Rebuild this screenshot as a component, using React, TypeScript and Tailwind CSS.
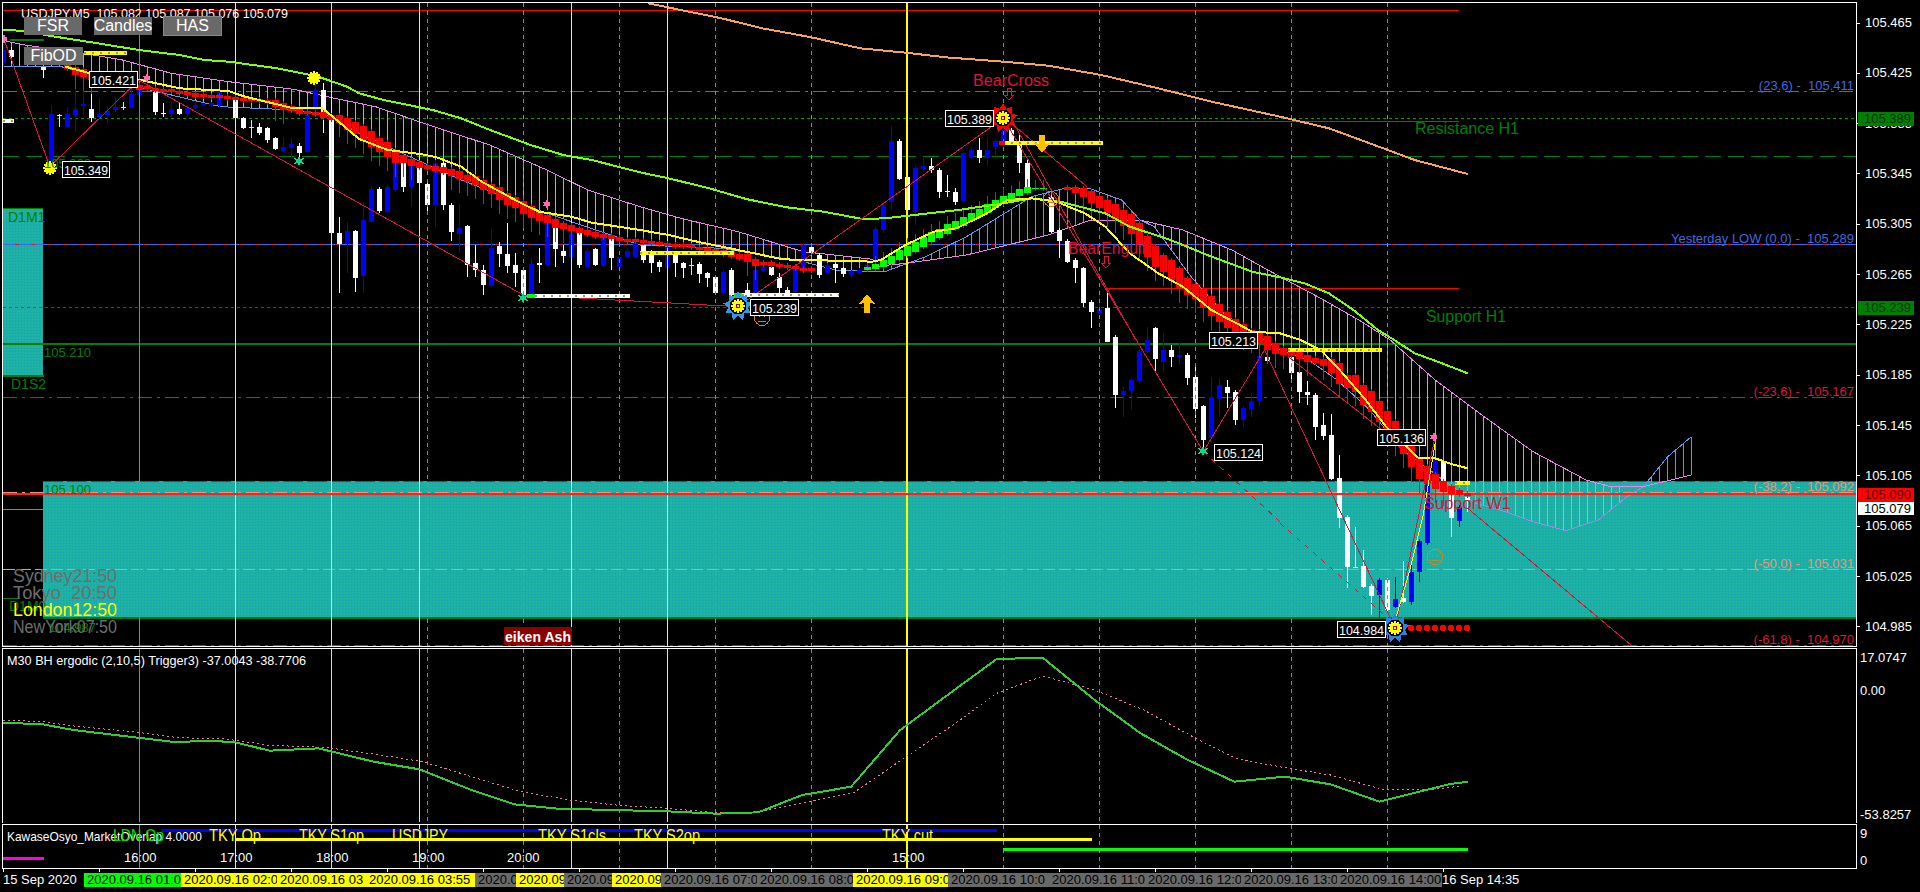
import type { ReactNode } from "react";

type Pt = number[];

// positions below were read off the zoomed crops: x scaled 2.45, y scaled 3
const at = (ox: number, oy: number, pts: Pt[]): Pt[] => pts.map(([x, y]) => [ox + x / 2.45, oy + y / 3]);
const sub = (ox: number, pts: Pt[]): Pt[] => pts.map(([x, y]) => [ox + x / 1.633, 640 + y / 3]);
const barX = (i: number) => 3 + 8 * i;
const str = (pts: Pt[]) => pts.map((p) => p.join(",")).join(" ");

function interp(pts: Pt[], x: number) {
  for (let i = 1; i < pts.length; i++) {
    if (x <= pts[i][0]) {
      const t = (x - pts[i - 1][0]) / (pts[i][0] - pts[i - 1][0] || 1);
      return pts[i - 1][1] + t * (pts[i][1] - pts[i - 1][1]);
    }
  }
  return pts[pts.length - 1][1];
}

// [bar, colour, wick top, body top, body bottom, wick bottom]
type Bar = [number, string, number, number, number, number];

const barsA: Bar[] = [
  [0, "b", 120, 150, 190, 200], [1, "w", 140, 150, 170, 190], [5, "w", 200, 200, 210, 235], [6, "b", 315, 342, 490, 495],
  [7, "y", 342, 345, 345, 380], [8, "b", 322, 342, 380, 382], [9, "b", 250, 327, 345, 395], [10, "b", 250, 312, 317, 345],
  [11, "w", 268, 327, 355, 365], [12, "b", 295, 342, 352, 355], [13, "b", 320, 333, 345, 370], [14, "b", 290, 320, 330, 335],
  [15, "y", 305, 322, 322, 330], [16, "b", 250, 283, 323, 325], [17, "b", 260, 270, 285, 288], [18, "b", 250, 255, 270, 272],
  [19, "w", 260, 275, 335, 345], [20, "w", 310, 338, 343, 350], [21, "b", 305, 327, 342, 350], [22, "w", 305, 327, 342, 344],
  [23, "b", 315, 323, 343, 350], [24, "b", 310, 316, 323, 326], [25, "b", 308, 312, 316, 320], [26, "b", 305, 308, 316, 320],
  [27, "b", 270, 275, 315, 325], [29, "w", 275, 295, 355, 360], [30, "w", 350, 355, 385, 387], [31, "y", 360, 382, 382, 415],
  [32, "w", 370, 380, 400, 405], [33, "w", 380, 385, 420, 430], [34, "w", 410, 415, 447, 450], [35, "b", 410, 442, 453, 455],
  [36, "b", 415, 432, 443, 470], [37, "w", 430, 437, 460, 470], [38, "b", 340, 345, 455, 458], [39, "b", 250, 270, 330, 340],
  [40, "w", 250, 270, 345, 400], [41, "w", 350, 350, 700, 702], [42, "w", 650, 700, 732, 880], [43, "b", 665, 693, 732, 820],
  [44, "w", 690, 693, 833, 875], [45, "b", 605, 660, 827, 880], [46, "b", 558, 568, 665, 667], [47, "w", 560, 568, 633, 640],
  [48, "b", 555, 560, 635, 640], [49, "b", 490, 490, 570, 575], [50, "w", 480, 490, 560, 575], [51, "b", 480, 490, 560, 620],
  [52, "w", 480, 490, 550, 555], [53, "w", 545, 553, 615, 640], [54, "b", 480, 490, 615, 680], [55, "w", 480, 490, 615, 630],
  [56, "w", 610, 615, 695, 722], [57, "b", 612, 685, 702, 760], [58, "w", 675, 678, 795, 830], [59, "w", 735, 790, 810, 832],
  [60, "w", 795, 810, 855, 885], [61, "b", 688, 743, 857, 860], [62, "w", 725, 737, 762, 800], [63, "w", 670, 762, 797, 820],
  [64, "w", 760, 795, 818, 860], [65, "w", 805, 810, 885, 888], [66, "b", 775, 792, 882, 884], [67, "w", 745, 788, 795, 850],
  [68, "b", 630, 670, 795, 798], [69, "w", 675, 680, 748, 800], [70, "w", 735, 752, 768, 790], [71, "b", 695, 700, 772, 800],
  [72, "w", 695, 700, 795, 805], [73, "b", 745, 752, 800, 802], [74, "w", 745, 748, 795, 797], [75, "b", 710, 715, 797, 800],
  [76, "w", 710, 715, 775, 810], [77, "b", 770, 772, 800, 820], [78, "b", 745, 752, 770, 772], [79, "b", 725, 730, 772, 775],
];

const barsB: Bar[] = [
  [0, "w", 728, 735, 780, 790], [1, "w", 750, 755, 790, 820], [2, "w", 780, 785, 800, 815], [3, "b", 735, 740, 805, 808],
  [4, "w", 755, 760, 790, 830], [5, "w", 785, 790, 805, 835], [6, "y", 775, 795, 795, 825], [7, "w", 785, 792, 822, 850],
  [8, "w", 815, 820, 833, 860], [9, "w", 825, 830, 878, 885], [10, "b", 810, 815, 880, 882], [11, "w", 805, 810, 885, 887],
  [13, "w", 850, 870, 885, 887], [14, "b", 805, 810, 880, 882], [15, "b", 790, 800, 812, 815], [16, "w", 790, 800, 825, 827],
  [17, "w", 820, 830, 865, 880], [18, "w", 860, 870, 885, 887], [19, "b", 795, 800, 875, 878], [20, "b", 730, 735, 800, 802],
  [21, "w", 735, 740, 760, 762], [22, "w", 760, 765, 825, 835], [23, "b", 790, 795, 820, 822], [24, "w", 790, 792, 805, 850],
  [25, "w", 800, 805, 822, 830], [26, "b", 810, 815, 825, 830], [27, "b", 805, 810, 818, 822], [28, "b", 780, 795, 808, 810],
  [29, "b", 680, 688, 780, 785], [30, "b", 605, 615, 690, 700], [31, "b", 378, 423, 605, 630], [32, "w", 418, 423, 537, 540],
  [33, "w", 525, 530, 630, 632], [34, "b", 498, 503, 635, 675], [35, "b", 475, 497, 507, 510], [36, "w", 475, 497, 510, 520],
  [37, "w", 505, 510, 575, 595], [38, "w", 525, 573, 577, 590], [39, "w", 565, 575, 605, 615], [40, "b", 455, 460, 603, 605],
  [41, "b", 440, 450, 473, 476], [42, "w", 415, 450, 475, 490], [43, "b", 415, 450, 473, 497], [44, "b", 418, 423, 440, 470],
  [45, "b", 385, 390, 423, 425], [46, "w", 385, 390, 425, 427], [47, "w", 400, 425, 490, 520], [48, "w", 475, 490, 570, 575],
  [51, "w", 585, 590, 697, 700], [52, "w", 685, 690, 722, 775], [53, "w", 718, 722, 785, 790], [54, "w", 775, 780, 805, 850],
  [55, "w", 800, 805, 908, 920], [56, "w", 900, 905, 935, 985], [57, "b", 870, 928, 940, 942], [58, "w", 870, 925, 1025, 1027],
  [59, "w", 1005, 1012, 1185, 1225], [60, "b", 1160, 1173, 1185, 1250], [61, "b", 1135, 1140, 1173, 1230], [62, "b", 1048, 1053, 1142, 1145],
  [63, "b", 980, 1020, 1055, 1058], [64, "w", 980, 985, 1077, 1115], [65, "b", 1000, 1050, 1085, 1115], [66, "w", 1035, 1050, 1072, 1100],
  [67, "b", 1030, 1065, 1070, 1095], [68, "w", 1060, 1065, 1133, 1155], [69, "w", 1090, 1131, 1227, 1255], [70, "w", 1214, 1218, 1320, 1350],
  [71, "b", 1130, 1192, 1315, 1318], [72, "b", 1135, 1155, 1197, 1250], [73, "w", 1140, 1160, 1178, 1225], [74, "w", 1170, 1175, 1260, 1275],
  [75, "b", 1218, 1223, 1260, 1280], [76, "b", 1180, 1203, 1228, 1250], [77, "b", 1060, 1067, 1203, 1217], [78, "w", 1065, 1070, 1082, 1085],
];

const barsC: Bar[] = [
  [1, "w", 45, 52, 100, 120], [2, "w", 90, 95, 155, 190], [3, "w", 123, 155, 165, 195], [4, "w", 160, 165, 262, 300],
  [5, "w", 220, 255, 288, 300], [6, "w", 222, 285, 417, 420], [7, "w", 345, 415, 535, 565], [8, "w", 525, 530, 680, 745],
  [9, "y", 560, 680, 680, 682], [10, "w", 630, 678, 742, 745], [11, "w", 733, 738, 768, 825], [12, "b", 715, 720, 765, 835],
  [13, "w", 715, 720, 810, 815], [14, "b", 710, 777, 800, 805], [15, "w", 662, 775, 785, 790], [16, "b", 670, 697, 785, 795],
  [17, "b", 598, 603, 697, 725], [18, "b", 375, 432, 610, 615], [19, "b", 355, 360, 430, 432], [20, "w", 360, 365, 432, 434],
  [21, "w", 432, 437, 535, 590], [22, "b", 495, 500, 542, 560], [23, "w", 465, 470, 480, 515],
];

const allBars: Bar[] = [
  ...barsA,
  ...barsB.map(([i, c, a, b, d, e]): Bar => [i + 80, c, a, b, d, e]),
  ...barsC.map(([i, c, a, b, d, e]): Bar => [i + 160, c, a + 1020, b + 1020, d + 1020, e + 1020]),
];

const redOne = [
  200, 212, 218, 230, 235, 240, 248, 250, 252, 262, 262, 268, 270, 272, 277, 280, 285, 287, 289, 290, 292, 295, 297, 298, 302, 305,
  310, 320, 325, 333, 338, 340, 345, 353, 358, 372, 385, 400, 417, 435, 448, 470, 478, 488, 495, 500, 505, 510, 518, 525, 535, 542,
  555, 567, 580, 597, 607, 622, 637, 650, 657, 670, 678, 685, 692, 698, 703, 708, 712, 717, 720, 722,
  725, 727, 730, 733, 735, 737, 740, 745, 748, 752, 757, 762, 770, 775, 788, 790, 792, 797, 800, 803, 807, 808,
];
const redTwo = [
  565, 570, 578, 592, 605, 620, 635, 655, 672, 700, 740, 770, 790, 810, 835, 860, 875, 895, 918, 940, 960, 975, 990, 1003, 1012, 1030, 1045,
  1055, 1060, 1067, 1075, 1082, 1088, 1098, 1120, 1145, 1150, 1185, 1205, 1235, 1265, 1295, 1330, 1370, 1405, 1425, 1445, 1460, 1470, 1478, 1483,
];
// [bar, centre, height]
const greenHa: Pt[] = [
  [108, 805, 8], [109, 800, 15], [110, 790, 20], [111, 780, 25], [112, 765, 28], [113, 752, 30], [114, 740, 30], [115, 725, 30], [116, 712, 30],
  [117, 700, 28], [118, 687, 28], [119, 675, 26], [120, 665, 26], [121, 652, 24], [122, 640, 24], [123, 625, 25], [124, 612, 25], [125, 600, 25],
  [126, 590, 20], [127, 578, 20], [128, 570, 18], [129, 565, 4], [130, 565, 4],
];

const yellowMa = [
  ...at(0, 0, [[160, 200], [215, 218], [300, 235], [345, 240], [440, 265], [560, 273], [600, 290], [720, 325], [790, 325], [820, 355], [880, 417], [950, 450], [1030, 462], [1070, 472], [1130, 500], [1180, 545], [1270, 605], [1320, 635], [1400, 650], [1450, 668], [1568, 690]]),
  ...at(640, 0, [[70, 705], [140, 725], [240, 750], [350, 778], [570, 785], [590, 780], [650, 735], [720, 695], [775, 685], [850, 640], [900, 600], [960, 595], [1020, 605], [1090, 640], [1140, 680], [1200, 760], [1270, 820], [1330, 860], [1400, 930], [1500, 995], [1568, 1000]]),
  ...at(1280, 340, [[50, 0], [100, 30], [150, 95], [210, 180], [260, 260], [340, 355], [380, 355], [420, 372], [460, 385]]),
];
const limeMa = [
  ...at(0, 0, [[7, 90], [50, 92]]),
  ...at(0, 0, [[135, 110], [240, 130], [340, 150], [440, 165], [500, 180], [560, 185], [680, 205], [780, 230], [850, 260], [880, 280], [940, 300], [1060, 330], [1130, 355], [1190, 385], [1300, 435], [1380, 465], [1450, 480], [1568, 517]]),
  ...at(640, 0, [[70, 535], [170, 565], [260, 597], [360, 622], [450, 635], [545, 657], [600, 655], [650, 648], [780, 630], [880, 612], [960, 595], [1030, 605], [1140, 640], [1200, 680], [1300, 720], [1400, 770], [1500, 815], [1568, 832]]),
  ...at(1280, 0, [[60, 850], [120, 880], [180, 930], [240, 990], [280, 1020]]),
  ...at(1280, 340, [[330, 40], [380, 62], [460, 100]]),
];
const orangeMa = [
  ...at(640, 0, [[20, 10], [100, 30], [200, 55], [300, 85], [420, 112], [540, 145], [650, 158], [750, 172], [890, 185], [1000, 197], [1130, 225], [1270, 265], [1400, 305], [1568, 350]]),
  ...at(1280, 0, [[120, 385], [220, 430], [330, 480], [460, 522]]),
];

const pinkTop = [
  ...at(0, 0, [[10, 122], [60, 135], [205, 160], [300, 180], [420, 220], [560, 245], [720, 268], [820, 295], [920, 320], [1050, 375], [1200, 435], [1340, 510], [1440, 570], [1568, 620]]),
  ...at(640, 0, [[100, 655], [240, 695], [400, 755], [572, 778]]),
];
const blueUnder = [
  ...at(0, 0, [[10, 200], [150, 200], [340, 262], [540, 320], [720, 330], [800, 345], [880, 400], [950, 440], [1040, 490], [1130, 540], [1340, 640], [1568, 735]]),
  ...at(640, 0, [[200, 745], [400, 785], [480, 810], [572, 815]]),
];
const blueTop = at(640, 0, [[572, 815], [600, 815], [700, 770], [800, 710], [880, 650], [960, 590], [1040, 565], [1100, 565], [1180, 600], [1225, 660]]);
const pinkUnder = at(640, 0, [[572, 800], [650, 790], [800, 765], [1000, 705], [1100, 662], [1225, 660]]);
const pinkTopTwo = [
  ...at(640, 0, [[1225, 660], [1330, 690], [1450, 750], [1568, 830]]),
  ...at(1280, 0, [[100, 895], [200, 965], [270, 1020]]),
  ...at(1280, 340, [[380, 120], [500, 230], [620, 335], [750, 420], [810, 440], [890, 440]]),
];
const blueUnderTwo = [
  ...at(640, 0, [[1225, 660], [1260, 680], [1350, 830], [1430, 940], [1530, 1020]]),
  ...at(1280, 340, [[0, 30], [70, 60], [140, 120], [220, 210], [300, 330], [400, 420], [480, 490], [540, 510], [620, 545], [700, 572], [780, 540], [850, 470], [890, 440]]),
];
const blueTopTwo = at(1280, 340, [[890, 440], [950, 350], [1008, 290]]);
const pinkUnderTwo = at(1280, 340, [[890, 440], [1008, 405]]);

const zigzag = [
  [4, 39], ...at(0, 0, [[122, 500], [340, 240], [1282, 885]]), ...at(640, 0, [[240, 920], [890, 355]]),
  ...at(640, 340, [[1380, 335], [1530, 30]]), ...at(1280, 340, [[282, 865], [380, 290]]),
];
const thinLines: Pt[][] = [
  at(640, 0, [[905, 365], [1095, 560]]),
  at(640, 0, [[920, 380], [1215, 1020]]),
  at(1280, 340, [[20, 50], [250, 270], [360, 400]]),
  at(1280, 340, [[460, 505], [860, 915]]),
];

const ergodic = [
  ...sub(0, [[5, 248], [70, 253], [120, 270], [220, 292], [280, 305], [345, 304], [380, 305], [440, 332], [520, 325], [610, 365], [685, 388], [770, 450], [840, 493], [910, 506], [1000, 510], [1090, 514], [1170, 521], [1238, 517], [1310, 465], [1390, 440], [1470, 270], [1568, 137]]),
  ...sub(960, [[60, 57], [100, 55], [135, 53], [220, 180], [295, 280], [370, 358], [448, 425], [530, 410], [605, 433], [685, 485], [800, 432], [830, 425]]),
];
const trigger = [
  ...sub(0, [[5, 240], [70, 245], [120, 258], [230, 278], [290, 293], [370, 297], [440, 316], [530, 322], [620, 345], [690, 365], [770, 410], [850, 455], [930, 480], [1010, 496], [1090, 505], [1170, 518], [1238, 517], [1310, 490], [1395, 457], [1480, 350], [1568, 240]]),
  ...sub(960, [[60, 160], [135, 108], [220, 150], [300, 210], [380, 290], [450, 355], [530, 383], [605, 405], [690, 448], [770, 448], [820, 438]]),
];

const gridXs = [427, 523, 619, 715, 811, 907, 1003, 1099, 1195, 1291, 1387];
const sessionLines: [number, string, number][] = [
  [139.5, "#00e000", 1], [235.5, "#ffff00", 1], [331.5, "#ffff00", 1], [419.5, "#ffff00", 1], [571.5, "#ffff00", 1], [667.5, "#ffff00", 1], [907, "#ffff00", 2],
];

function T({ x, y, cls, end, len, children }: { x: number; y: number; cls: string; end?: boolean; len?: number; children: ReactNode }) {
  return (
    <text x={x} y={y} dominantBaseline="central" textAnchor={end ? "end" : "start"} textLength={len} lengthAdjust={len ? "spacingAndGlyphs" : undefined} className={`whitespace-pre ${cls}`}>
      {children}
    </text>
  );
}

function Tag({ x, y, w, text }: { x: number; y: number; w: number; text: string }) {
  return (
    <g>
      <rect x={x + 0.5} y={y + 0.5} width={w} height={16} fill="#000" stroke="#fff" />
      <T x={x + 2} y={y + 9} len={w - 3} cls="fill-white text-[13px]">{text}</T>
    </g>
  );
}

function Burst({ x, y, r, n, fill, ratio = 0.7 }: { x: number; y: number; r: number; n: number; fill: string; ratio?: number }) {
  const pts: Pt[] = [];
  for (let i = 0; i < n * 2; i++) {
    const a = (Math.PI * i) / n - Math.PI / 2;
    const rad = i % 2 ? r * ratio : r;
    pts.push([x + Math.cos(a) * rad, y + Math.sin(a) * rad]);
  }
  return <polygon points={str(pts)} fill={fill} />;
}

function Sun({ x, y, ring }: { x: number; y: number; ring?: string }) {
  return (
    <g>
      {ring && <Burst x={x} y={y} r={15} n={9} fill={ring} ratio={0.65} />}
      {ring && <circle cx={x} cy={y} r={8.5} fill="#000" />}
      <Burst x={x} y={y} r={7.5} n={12} fill="#ffff00" ratio={0.75} />
      {ring && <circle cx={x} cy={y} r={2} fill="none" stroke="#a00000" />}
    </g>
  );
}

function Smiley({ x, y }: { x: number; y: number }) {
  return (
    <g fill="none" stroke="#c88a1e">
      <circle cx={x} cy={y} r={7.5} />
      <path d={`M${x - 3} ${y - 2}h1M${x + 2} ${y - 2}h1M${x - 4} ${y + 3}h8`} />
    </g>
  );
}

function HollowArrow({ x, y }: { x: number; y: number }) {
  return <path d={`M${x - 2} ${y - 6}h4v7h3l-5 5l-5 -5h3z`} fill="none" stroke="#dc143c" />;
}

function DotBar({ x1, x2, y, color }: { x1: number; x2: number; y: number; color: string }) {
  return (
    <g>
      <line x1={x1} x2={x2} y1={y} y2={y} stroke={color} strokeWidth={4} />
      <line x1={x1} x2={x2} y1={y} y2={y} stroke="#9a9a50" strokeWidth={1.5} strokeDasharray="2 6" />
    </g>
  );
}

function Grid({ top, bottom, dim }: { top: number; bottom: number; dim?: boolean }) {
  return (
    <g>
      {gridXs.map((x) => (
        <line key={x} x1={x + 0.5} x2={x + 0.5} y1={top} y2={bottom} stroke="#8a8a8a" strokeDasharray="4 4" />
      ))}
      {sessionLines.map(([x, c, w]) => (
        <line key={x} x1={x} x2={x} y1={top} y2={bottom} stroke={dim && (x === 331.5 || x === 571.5) ? "#d8d8c0" : c} strokeWidth={w} />
      ))}
    </g>
  );
}

function Hatch({ top, bottom, from, to, color }: { top: Pt[]; bottom: Pt[]; from: number; to: number; color: string }) {
  const rows: ReactNode[] = [];
  for (let i = from; i <= to; i++) {
    const x = barX(i) + 0.5;
    rows.push(<line key={i} x1={x} x2={x} y1={interp(top, x)} y2={interp(bottom, x)} stroke={color} />);
  }
  return <g>{rows}</g>;
}

function Candles() {
  return (
    <g>
      {allBars.map(([i, c, wt, bt, bb, wb]) => {
        const x = barX(i);
        const col = c === "b" ? "#0000ff" : c === "y" ? "#ffff00" : "#ffffff";
        return (
          <g key={i}>
            <line x1={x + 0.5} x2={x + 0.5} y1={wt / 3} y2={wb / 3} stroke={col} />
            <rect x={x - 2} y={bt / 3} width={5} height={Math.max(1, (bb - bt) / 3)} fill={col} />
          </g>
        );
      })}
    </g>
  );
}

function RedBlocks({ ys, start }: { ys: number[]; start: number }) {
  return (
    <g>
      {ys.map((y, k) => {
        const prev = ys[k - 1] ?? y;
        const next = ys[k + 1] ?? y;
        const h = Math.min(62, Math.max(9, Math.abs(next - prev) * 1.3)) / 3;
        const x = barX(start + k);
        const mid = y / 3;
        return (
          <g key={k}>
            <line x1={x + 0.5} x2={x + 0.5} y1={mid - h / 2 - 2} y2={mid + h / 2 + (h > 6 ? 14 : 2)} stroke="#dc143c" />
            <rect x={x - 3} y={mid - h / 2} width={7} height={h} fill="#ff0000" />
          </g>
        );
      })}
    </g>
  );
}

function GreenBlocks() {
  return (
    <g>
      {greenHa.map(([i, y, h]) => {
        const x = barX(i);
        return (
          <g key={i}>
            <line x1={x + 0.5} x2={x + 0.5} y1={y / 3 - h / 6 - 8} y2={y / 3 + h / 6 + 2} stroke="#008a00" />
            <rect x={x - 3} y={y / 3 - h / 6} width={7} height={h / 3} fill="#00ff00" />
          </g>
        );
      })}
    </g>
  );
}

function MainChart() {
  return (
    <svg width={1853} height={643} viewBox="3 3 1853 643" shapeRendering="crispEdges" className="block">
      <defs>
        <pattern id="teal" width="3" height="3" patternUnits="userSpaceOnUse">
          <rect width="3" height="3" fill="#1db0a6" />
          <rect width="1" height="1" fill="#12a4a8" />
          <rect x="2" y="1" width="1" height="1" fill="#2ab49b" />
        </pattern>
      </defs>

      <rect x={3} y={208} width={40} height={168} fill="url(#teal)" />
      <line x1={3} x2={43} y1={208.5} y2={208.5} stroke="#008000" />
      <line x1={3} x2={44} y1={376} y2={376} stroke="#008000" strokeWidth={2} />
      <rect x={43} y={481} width={1813} height={137} fill="url(#teal)" />
      <line x1={43} x2={1856} y1={481.5} y2={481.5} stroke="#008000" strokeDasharray="20 4" />
      <line x1={43} x2={1856} y1={618} y2={618} stroke="#008000" strokeWidth={2} />
      <line x1={10} x2={44} y1={40} y2={40} stroke="#008000" strokeWidth={2} />
      <line x1={3} x2={20} y1={598.5} y2={598.5} stroke="#008000" />

      <line x1={3} x2={1459} y1={10.5} y2={10.5} stroke="#ff0000" />
      <line x1={1015} x2={1459} y1={121.5} y2={121.5} stroke="#ff0000" />
      <line x1={1107} x2={1459} y1={288.5} y2={288.5} stroke="#ff0000" />
      <line x1={3} x2={1856} y1={91.5} y2={91.5} stroke="#4169e1" strokeDasharray="14 5 3 5" />
      <line x1={3} x2={1856} y1={118.5} y2={118.5} stroke="#00a000" strokeDasharray="3 3" />
      <line x1={3} x2={1856} y1={156.5} y2={156.5} stroke="#008000" strokeDasharray="16 7" />
      <line x1={3} x2={1856} y1={244.5} y2={244.5} stroke="#dc143c" />
      <line x1={3} x2={1856} y1={244.5} y2={244.5} stroke="#4169e1" strokeDasharray="12 4" />
      <line x1={3} x2={1856} y1={307.5} y2={307.5} stroke="#008000" strokeDasharray="3 3" />
      <line x1={3} x2={1856} y1={344} y2={344} stroke="#008000" strokeWidth={2} />
      <line x1={3} x2={1856} y1={397.5} y2={397.5} stroke="#dc143c" strokeDasharray="14 5 3 5" />
      <line x1={3} x2={1856} y1={492.5} y2={492.5} stroke="#e9967a" strokeDasharray="14 5 3 5" />
      <line x1={3} x2={1856} y1={509} y2={509} stroke="#778899" />
      <line x1={3} x2={1856} y1={569.5} y2={569.5} stroke="#e9967a" strokeDasharray="12 4" />
      <line x1={3} x2={1856} y1={645.5} y2={645.5} stroke="#dc143c" strokeDasharray="14 5 3 5" />

      <Hatch top={pinkTop} bottom={blueUnder} from={0} to={108} color="#ee82ee" />
      <Hatch top={blueTop} bottom={pinkUnder} from={109} to={142} color="#6495ed" />
      <Hatch top={pinkTopTwo} bottom={blueUnderTwo} from={143} to={202} color="#ee82ee" />
      <Hatch top={blueTopTwo} bottom={pinkUnderTwo} from={205} to={211} color="#6495ed" />
      <polyline points={str(pinkTop)} fill="none" stroke="#ee82ee" />
      <polyline points={str(blueUnder)} fill="none" stroke="#6495ed" />
      <polyline points={str(blueTop)} fill="none" stroke="#6495ed" />
      <polyline points={str(pinkUnder)} fill="none" stroke="#ee82ee" />
      <polyline points={str(pinkTopTwo)} fill="none" stroke="#ee82ee" />
      <polyline points={str(blueUnderTwo)} fill="none" stroke="#9a8be8" />
      <polyline points={str(blueTopTwo)} fill="none" stroke="#6495ed" />
      <polyline points={str(pinkUnderTwo)} fill="none" stroke="#ee82ee" />

      <Candles />
      <Grid top={3} bottom={646} />
      <line x1={3} x2={1856} y1={494} y2={494} stroke="#ff2020" strokeWidth={2} />
      <RedBlocks ys={redOne} start={8} />
      <RedBlocks ys={redTwo} start={133} />
      <GreenBlocks />

      <polyline points={str(orangeMa)} fill="none" stroke="#f4a460" strokeWidth={2} />
      <polyline points={str(limeMa)} fill="none" stroke="#7fff00" strokeWidth={2} />
      <polyline points={str(yellowMa)} fill="none" stroke="#ffff00" strokeWidth={2} />
      <polyline points={str(zigzag)} fill="none" stroke="#dc143c" />
      {thinLines.map((l, i) => (
        <polyline key={i} points={str(l)} fill="none" stroke="#e01030" />
      ))}
      <polyline points={str(at(640, 340, [[1380, 335], [1568, 545]]))} fill="none" stroke="#e01030" strokeDasharray="5 6" />
      <polyline points={str(at(1280, 340, [[0, 550], [270, 840]]))} fill="none" stroke="#e01030" strokeDasharray="5 6" />
      <polyline points={str(at(1280, 340, [[285, 830], [318, 690], [350, 530], [380, 310]]))} fill="none" stroke="#ffff00" />

      <DotBar x1={84} x2={127} y={53} color="#ffff00" />
      <DotBar x1={1003} x2={1103} y={143} color="#ffff00" />
      <DotBar x1={640} x2={734} y={253} color="#ffff00" />
      <DotBar x1={1288} x2={1382} y={350} color="#ffff00" />
      <DotBar x1={1455} x2={1470} y={483} color="#ffff00" />
      <DotBar x1={3} x2={14} y={121} color="#ffffff" />
      <DotBar x1={527} x2={630} y={296} color="#ffffff" />
      <DotBar x1={742} x2={839} y={295} color="#ffffff" />
      <rect x={527} y={294} width={8} height={4} fill="#00ff00" />
      <rect x={734} y={293} width={8} height={4} fill="#00ff00" />
      <rect x={999} y={141} width={6} height={4} fill="#ff0000" />
      {[0, 1, 2, 3, 4, 5, 6, 7, 8].map((k) => (
        <circle key={k} cx={1403 + k * 8} cy={628} r={3} fill="#ff0000" />
      ))}

      <Burst x={299} y={161} r={5.5} n={6} fill="#00e08a" ratio={0.45} />
      <Burst x={523} y={298} r={5.5} n={6} fill="#00e08a" ratio={0.45} />
      <Burst x={1203} y={451} r={5.5} n={6} fill="#00e08a" ratio={0.45} />
      <Burst x={147} y={78} r={5} n={6} fill="#ff69b4" ratio={0.45} />
      <Burst x={547} y={204} r={5} n={6} fill="#ff69b4" ratio={0.45} />
      <Burst x={1434} y={437} r={5} n={6} fill="#ff69b4" ratio={0.45} />
      <Burst x={4} y={39} r={5} n={6} fill="#ff69b4" ratio={0.45} />

      <Sun x={50} y={168} />
      <Sun x={314} y={78} />
      <Sun x={1003} y={118} ring="#ff0000" />
      <Sun x={738} y={306} ring="#2f9be8" />
      <Sun x={1395} y={628} ring="#2f7fe8" />
      <Smiley x={762} y={318} />
      <Smiley x={1435} y={557} />
      <Smiley x={1051} y={199} />

      <polygon points="867,294 875,304 870,303 870,313 864,313 864,303 859,304" fill="#ffc000" />
      <polygon points="1042,153 1050,143 1045,144 1045,135 1039,135 1039,144 1034,143" fill="#ffc000" />

      <HollowArrow x={1009} y={94} />
      <HollowArrow x={1106} y={262} />
      <T x={973} y={80} len={76} cls="fill-[#dc143c] text-[16px]">BearCross</T>
      <T x={1068} y={248} len={78} cls="fill-[#dc143c] text-[16px]">BearEngulf</T>
      <T x={1415} y={128} len={104} cls="fill-[#008000] text-[16px]">Resistance H1</T>
      <T x={1426} y={316} len={80} cls="fill-[#008000] text-[16px]">Support H1</T>
      <T x={1424} y={503} len={87} cls="fill-[#e0103c] text-[16px]">Support W1</T>

      <T x={1854} y={85} end cls="fill-[#4169e1] text-[13px]">(23.6) -  105.411</T>
      <T x={1854} y={238} end cls="fill-[#4169e1] text-[13px]">Yesterday LOW (0.0) -  105.289</T>
      <T x={1854} y={391} end cls="fill-[#dc143c] text-[13px]">(-23.6) -  105.167</T>
      <T x={1854} y={486} end cls="fill-[#e9967a] text-[13px]">(-38.2) -  105.092</T>
      <T x={1854} y={563} end cls="fill-[#e9967a] text-[13px]">(-50.0) -  105.031</T>
      <T x={1854} y={639} end cls="fill-[#dc143c] text-[13px]">(-61.8) -  104.970</T>

      <T x={8} y={217} cls="fill-[#008000] text-[14px]">D1M1</T>
      <T x={11} y={384} cls="fill-[#008000] text-[14px]">D1S2</T>
      <T x={44} y={352} cls="fill-[#008000] text-[13px]">105.210</T>
      <T x={44} y={489} cls="fill-[#008000] text-[13px]">105.100</T>
      <T x={9} y={606} cls="fill-[#008000] text-[14px]">D1M0</T>
      <T x={49} y={627} cls="fill-[#008000] text-[13px]">104.987</T>
      <T x={44} y={163} cls="fill-[#008000] text-[13px]">105.368</T>

      <Tag x={62} y={161} w={47} text="105.349" />
      <Tag x={89} y={71} w={48} text="105.421" />
      <Tag x={945} y={110} w={48} text="105.389" />
      <Tag x={750} y={299} w={48} text="105.239" />
      <Tag x={1209} y={332} w={48} text="105.213" />
      <Tag x={1214} y={444} w={48} text="105.124" />
      <Tag x={1377} y={429} w={48} text="105.136" />
      <Tag x={1337} y={621} w={48} text="104.984" />

      <T x={13} y={576} len={104} cls="fill-[#6e6e6e] text-[18px]">Sydney21:50</T>
      <T x={13} y={593} len={104} cls="fill-[#6e6e6e] text-[18px]">Tokyo  20:50</T>
      <T x={13} y={610} len={104} cls="fill-[#ffff00] text-[18px]">London12:50</T>
      <T x={13} y={627} len={104} cls="fill-[#6e6e6e] text-[18px]">NewYork07:50</T>

      <rect x={504} y={627} width={68} height={18} fill="#8b0000" />
      <T x={505} y={636} len={66} cls="fill-white text-[15px] font-bold">eiken Ash</T>

      <T x={21} y={13} len={267} cls="fill-white text-[13px]">USDJPY,M5  105.082 105.087 105.076 105.079</T>
    </svg>
  );
}

function ToolBtn({ label, cls }: { label: string; cls: string }) {
  return <div className={`absolute bg-[#696969] text-white text-[16px] flex items-center justify-center ${cls}`}>{label}</div>;
}

function ErgodicChart() {
  return (
    <svg width={1853} height={173} viewBox="3 649 1853 173" shapeRendering="crispEdges" className="block">
      <Grid top={649} bottom={822} dim />
      <polyline points={str(trigger)} fill="none" stroke="#f07a9a" strokeDasharray="2 3" />
      <polyline points={str(ergodic)} fill="none" stroke="#32cd32" strokeWidth={2} />
      <T x={7} y={660} len={299} cls="fill-white text-[13px]">M30 BH ergodic (2,10,5) Trigger3) -37.0043 -38.7706</T>
    </svg>
  );
}

const sessionTags: [number, number, string, string][] = [
  [113, 164, "#00e000", "LDN Op"],
  [209, 261, "#ffff00", "TKY Op"],
  [299, 364, "#ffff00", "TKY S1op"],
  [392, 448, "#ffff00", "USDJPY"],
  [538, 606, "#ffff00", "TKY S1cls"],
  [634, 700, "#ffff00", "TKY S2op"],
  [882, 933, "#ffff00", "TKY cut"],
];

function OverlapChart() {
  return (
    <svg width={1853} height={43} viewBox="3 825 1853 43" shapeRendering="crispEdges" className="block">
      <Grid top={825} bottom={868} dim />
      <line x1={161} x2={997} y1={830.5} y2={830.5} stroke="#0000ff" strokeWidth={3} />
      <line x1={236} x2={1092} y1={839.5} y2={839.5} stroke="#ffff00" strokeWidth={3} />
      <line x1={1003} x2={1468} y1={849.5} y2={849.5} stroke="#00ff00" strokeWidth={3} />
      <line x1={3} x2={44} y1={858.5} y2={858.5} stroke="#ff00e0" strokeWidth={3} />
      <T x={7} y={836} len={195} cls="fill-white text-[13px]">KawaseOsyo_MarketOverlap 4.0000</T>
      {sessionTags.map(([x1, x2, c, label]) => (
        <text key={label} x={x1} y={835} fill={c} dominantBaseline="central" textLength={x2 - x1} lengthAdjust="spacingAndGlyphs" className="text-[16px]">
          {label}
        </text>
      ))}
      {[[124, "16:00"], [220, "17:00"], [316, "18:00"], [412, "19:00"], [507, "20:00"], [892, "15:00"]].map(([x, label]) => (
        <T key={label} x={x as number} y={857} cls="fill-white text-[13px]">{label}</T>
      ))}
    </svg>
  );
}

const prices = ["105.465", "105.425", "105.385", "105.345", "105.305", "105.265", "105.225", "105.185", "105.145", "105.105", "105.065", "105.025", "104.985"];

function PriceAxis() {
  return (
    <div className="relative w-[63px] h-[644px] flex flex-col justify-between pt-[13px] pb-[11px] text-[13px] text-white">
      {prices.map((p) => (
        <div key={p} className="flex items-center gap-[5px] h-4 leading-4">
          <span className="w-[3px] h-px bg-white" />
          <span>{p}</span>
        </div>
      ))}
      <div className="absolute left-[1px] top-[110px] w-[56px] h-[14px] leading-[14px] bg-[#008000] text-[#003300] pl-[6px]">105.389</div>
      <div className="absolute left-[1px] top-[299px] w-[56px] h-[14px] leading-[14px] bg-[#008000] text-[#003300] pl-[6px]">105.239</div>
      <div className="absolute left-[1px] top-[486px] w-[56px] h-[14px] leading-[14px] bg-[#ff0000] text-[#600000] pl-[6px]">105.090</div>
      <div className="absolute left-[1px] top-[500px] w-[56px] h-[13px] leading-[13px] bg-white text-black pl-[6px]">105.079</div>
    </div>
  );
}

// the labels overlap each other in the terminal, only the visible part is written
const dateTags: [string, string, string][] = [
  ["w-[97px]", "bg-[#00ff00]", "2020.09.16 01:0"],
  ["w-[96px]", "bg-[#ffff00]", "2020.09.16 02:0"],
  ["w-[89px]", "bg-[#ffff00]", "2020.09.16 03"],
  ["w-[109px]", "bg-[#ffff00]", "2020.09.16 03:55"],
  ["w-[41px]", "bg-[#696969]", "2020.0"],
  ["w-[48px]", "bg-[#ffff00]", "2020.09"],
  ["w-[48px]", "bg-[#696969]", "2020.09"],
  ["w-[49px]", "bg-[#ffff00]", "2020.09"],
  ["w-[96px]", "bg-[#696969]", "2020.09.16 07:0"],
  ["w-[96px]", "bg-[#696969]", "2020.09.16 08:0"],
  ["w-[95px]", "bg-[#ffff00]", "2020.09.16 09:0"],
  ["w-[101px]", "bg-[#696969]", "2020.09.16 10:0"],
  ["w-[96px]", "bg-[#696969]", "2020.09.16 11:0"],
  ["w-[96px]", "bg-[#696969]", "2020.09.16 12:0"],
  ["w-[96px]", "bg-[#696969]", "2020.09.16 13:0"],
  ["w-[105px]", "bg-[#696969]", "2020.09.16 14:00"],
];

export default function App() {
  return (
    <div className="w-[1920px] h-[892px] overflow-hidden bg-black pt-[2px] font-['Liberation_Sans',Arial,sans-serif]">
      <div className="flex h-[645px]">
        <div className="relative ml-[2px] w-[1855px] flex-none border border-white">
          <MainChart />
          <ToolBtn label="FSR" cls="left-[21px] top-[14px] w-[58px] h-[18px]" />
          <ToolBtn label="Candles" cls="left-[91px] top-[14px] w-[58px] h-[18px]" />
          <ToolBtn label="HAS" cls="left-[160px] top-[13px] w-[59px] h-[20px] border border-[#8a8a8a]" />
          <ToolBtn label="FibOD" cls="left-[21px] top-[44px] w-[59px] h-[18px]" />
        </div>
        <PriceAxis />
      </div>

      <div className="flex h-[175px] mt-px">
        <div className="ml-[2px] w-[1855px] flex-none border-x border-t border-white">
          <ErgodicChart />
        </div>
        <div className="flex flex-col pt-[2px] pl-[3px] text-[13px] leading-4 text-white">
          <span>17.0747</span>
          <span className="mt-[17px]">0.00</span>
          <span className="mt-[108px]">-53.8257</span>
        </div>
      </div>

      <div className="flex h-[45px] mt-px">
        <div className="ml-[2px] w-[1855px] flex-none border border-white">
          <OverlapChart />
        </div>
        <div className="flex flex-col pt-[2px] pl-[3px] text-[13px] leading-4 text-white">
          <span>9</span>
          <span className="mt-[11px]">0</span>
        </div>
      </div>

      <div className="flex h-[3px] ml-[3px]">
        {Array.from({ length: 16 }).map((_, i) => (
          <span key={i} className="w-[96px] flex-none border-l border-white" />
        ))}
      </div>
      <div className="flex mt-px ml-[3px] h-[14px] text-[13px] leading-[14px] whitespace-nowrap">
        <span className="w-[81px] flex-none text-white">15 Sep 2020</span>
        {dateTags.map(([w, bg, label], i) => (
          <span key={i} className={`${w} ${bg} flex-none overflow-hidden pl-[3px] text-black`}>
            {label}
          </span>
        ))}
        <span className="flex-none text-white">16 Sep 14:35</span>
      </div>
    </div>
  );
}
